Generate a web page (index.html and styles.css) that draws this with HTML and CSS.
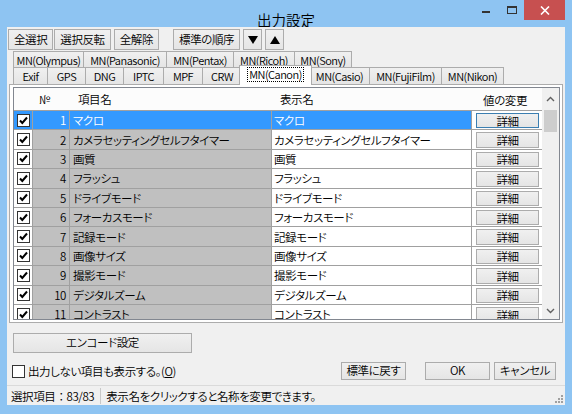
FILE: index.html
```html
<!DOCTYPE html>
<html lang="ja">
<head>
<meta charset="utf-8">
<title>出力設定</title>
<link rel="stylesheet" href="styles.css">
</head>
<body>
<div class="window">
  <div class="titlebar">
    <div></div>
    <div class="title">出力設定</div>
    <div class="caption">
      <div class="cap cap-min"><svg width="10" height="10" viewBox="0 0 10 10"><rect x="1" y="6" width="8" height="2" fill="#333"/></svg></div>
      <div class="cap cap-max"><svg width="12" height="10" viewBox="0 0 12 10"><rect x="1.5" y="1.5" width="9" height="7" fill="none" stroke="#333" stroke-width="1"/><rect x="1" y="1" width="10" height="2" fill="#333"/></svg></div>
      <div class="cap cap-close"><svg width="10" height="9" viewBox="0 0 10 9"><path d="M1 0.5 L9 8.5 M9 0.5 L1 8.5" stroke="#fff" stroke-width="1.6"/></svg></div>
    </div>
  </div>
  <div class="client">
    <div class="toolbar">
      <button class="btn">全選択</button>
      <button class="btn">選択反転</button>
      <button class="btn sp">全解除</button>
      <button class="btn sp-l">標準の順序</button>
      <button class="btn arrow sp"><svg width="10" height="8" viewBox="0 0 10 8"><polygon points="0,0 10,0 5,8" fill="#000"/></svg></button>
      <button class="btn arrow sp"><svg width="10" height="8" viewBox="0 0 10 8"><polygon points="0,8 10,8 5,0" fill="#000"/></svg></button>
    </div>
    <div class="tabs">
      <div class="tabrow r1">
        <div class="tab t-olympus">MN(Olympus)</div>
        <div class="tab t-panasonic">MN(Panasonic)</div>
        <div class="tab t-pentax">MN(Pentax)</div>
        <div class="tab t-ricoh">MN(Ricoh)</div>
        <div class="tab t-sony">MN(Sony)</div>
      </div>
      <div class="tabrow r2">
        <div class="tab t-exif">Exif</div>
        <div class="tab t-gps">GPS</div>
        <div class="tab t-dng">DNG</div>
        <div class="tab t-iptc">IPTC</div>
        <div class="tab t-mpf">MPF</div>
        <div class="tab t-crw">CRW</div>
        <div class="tab sel t-canon"><span class="focus">MN(Canon)</span></div>
        <div class="tab t-casio">MN(Casio)</div>
        <div class="tab t-fuji">MN(FujiFilm)</div>
        <div class="tab t-nikon">MN(Nikon)</div>
      </div>
    </div>
    <div class="panel">
      <div class="list">
        <div class="grid">
          <div class="row hdr">
            <div class="c"></div>
            <div class="c no">№</div>
            <div class="c name">項目名</div>
            <div class="c disp">表示名</div>
            <div class="c val">値の変更</div>
          </div>
          <div class="row selected">
            <div class="c chk"><svg class="cb" width="13" height="13" viewBox="0 0 13 13"><rect x="0.5" y="0.5" width="12" height="12" fill="#fff" stroke="#333"/><path d="M3 6.5 L5.3 9 L10 3.5" fill="none" stroke="#000" stroke-width="2"/></svg></div>
            <div class="c no">1</div><div class="c name">マクロ</div><div class="c disp">マクロ</div>
            <div class="c val"><span class="dbtn focused">詳細</span></div>
          </div>
          <div class="row">
            <div class="c chk"><svg class="cb" width="13" height="13" viewBox="0 0 13 13"><rect x="0.5" y="0.5" width="12" height="12" fill="#fff" stroke="#333"/><path d="M3 6.5 L5.3 9 L10 3.5" fill="none" stroke="#000" stroke-width="2"/></svg></div>
            <div class="c no">2</div><div class="c name">カメラセッティングセルフタイマー</div><div class="c disp">カメラセッティングセルフタイマー</div>
            <div class="c val"><span class="dbtn">詳細</span></div>
          </div>
          <div class="row">
            <div class="c chk"><svg class="cb" width="13" height="13" viewBox="0 0 13 13"><rect x="0.5" y="0.5" width="12" height="12" fill="#fff" stroke="#333"/><path d="M3 6.5 L5.3 9 L10 3.5" fill="none" stroke="#000" stroke-width="2"/></svg></div>
            <div class="c no">3</div><div class="c name">画質</div><div class="c disp">画質</div>
            <div class="c val"><span class="dbtn">詳細</span></div>
          </div>
          <div class="row">
            <div class="c chk"><svg class="cb" width="13" height="13" viewBox="0 0 13 13"><rect x="0.5" y="0.5" width="12" height="12" fill="#fff" stroke="#333"/><path d="M3 6.5 L5.3 9 L10 3.5" fill="none" stroke="#000" stroke-width="2"/></svg></div>
            <div class="c no">4</div><div class="c name">フラッシュ</div><div class="c disp">フラッシュ</div>
            <div class="c val"><span class="dbtn">詳細</span></div>
          </div>
          <div class="row">
            <div class="c chk"><svg class="cb" width="13" height="13" viewBox="0 0 13 13"><rect x="0.5" y="0.5" width="12" height="12" fill="#fff" stroke="#333"/><path d="M3 6.5 L5.3 9 L10 3.5" fill="none" stroke="#000" stroke-width="2"/></svg></div>
            <div class="c no">5</div><div class="c name">ドライブモード</div><div class="c disp">ドライブモード</div>
            <div class="c val"><span class="dbtn">詳細</span></div>
          </div>
          <div class="row">
            <div class="c chk"><svg class="cb" width="13" height="13" viewBox="0 0 13 13"><rect x="0.5" y="0.5" width="12" height="12" fill="#fff" stroke="#333"/><path d="M3 6.5 L5.3 9 L10 3.5" fill="none" stroke="#000" stroke-width="2"/></svg></div>
            <div class="c no">6</div><div class="c name">フォーカスモード</div><div class="c disp">フォーカスモード</div>
            <div class="c val"><span class="dbtn">詳細</span></div>
          </div>
          <div class="row">
            <div class="c chk"><svg class="cb" width="13" height="13" viewBox="0 0 13 13"><rect x="0.5" y="0.5" width="12" height="12" fill="#fff" stroke="#333"/><path d="M3 6.5 L5.3 9 L10 3.5" fill="none" stroke="#000" stroke-width="2"/></svg></div>
            <div class="c no">7</div><div class="c name">記録モード</div><div class="c disp">記録モード</div>
            <div class="c val"><span class="dbtn">詳細</span></div>
          </div>
          <div class="row">
            <div class="c chk"><svg class="cb" width="13" height="13" viewBox="0 0 13 13"><rect x="0.5" y="0.5" width="12" height="12" fill="#fff" stroke="#333"/><path d="M3 6.5 L5.3 9 L10 3.5" fill="none" stroke="#000" stroke-width="2"/></svg></div>
            <div class="c no">8</div><div class="c name">画像サイズ</div><div class="c disp">画像サイズ</div>
            <div class="c val"><span class="dbtn">詳細</span></div>
          </div>
          <div class="row">
            <div class="c chk"><svg class="cb" width="13" height="13" viewBox="0 0 13 13"><rect x="0.5" y="0.5" width="12" height="12" fill="#fff" stroke="#333"/><path d="M3 6.5 L5.3 9 L10 3.5" fill="none" stroke="#000" stroke-width="2"/></svg></div>
            <div class="c no">9</div><div class="c name">撮影モード</div><div class="c disp">撮影モード</div>
            <div class="c val"><span class="dbtn">詳細</span></div>
          </div>
          <div class="row">
            <div class="c chk"><svg class="cb" width="13" height="13" viewBox="0 0 13 13"><rect x="0.5" y="0.5" width="12" height="12" fill="#fff" stroke="#333"/><path d="M3 6.5 L5.3 9 L10 3.5" fill="none" stroke="#000" stroke-width="2"/></svg></div>
            <div class="c no">10</div><div class="c name">デジタルズーム</div><div class="c disp">デジタルズーム</div>
            <div class="c val"><span class="dbtn">詳細</span></div>
          </div>
          <div class="row">
            <div class="c chk"><svg class="cb" width="13" height="13" viewBox="0 0 13 13"><rect x="0.5" y="0.5" width="12" height="12" fill="#fff" stroke="#333"/><path d="M3 6.5 L5.3 9 L10 3.5" fill="none" stroke="#000" stroke-width="2"/></svg></div>
            <div class="c no">11</div><div class="c name">コントラスト</div><div class="c disp">コントラスト</div>
            <div class="c val"><span class="dbtn">詳細</span></div>
          </div>
        </div>
        <div class="vscroll">
          <div class="sb-up"><svg width="9" height="6" viewBox="0 0 9 6"><polyline points="1,5 4.5,1.5 8,5" fill="none" stroke="#606060" stroke-width="1.4"/></svg></div>
          <div class="sb-thumb"></div>
          <div class="sb-track"></div>
          <div class="sb-down"><svg width="9" height="6" viewBox="0 0 9 6"><polyline points="1,1 4.5,4.5 8,1" fill="none" stroke="#606060" stroke-width="1.4"/></svg></div>
        </div>
      </div>
    </div>
    <div class="encode-row">
      <button class="btn encode">エンコード設定</button>
    </div>
    <div class="opt-row">
      <label class="opt"><span class="box"></span><span>出力しない項目も表示する。(<u>O</u>)</span></label>
      <div class="dlg-btns">
        <button class="btn dlg">標準に戻す</button>
        <button class="btn dlg ok">OK</button>
        <button class="btn dlg cancel">キャンセル</button>
      </div>
    </div>
    <div class="status">
      <div class="st st1">選択項目：83/83</div>
      <div class="st st2">表示名をクリックすると名称を変更できます。</div>
      <div class="grip"><svg width="10" height="10" viewBox="0 0 10 10" fill="#a0a0a0"><rect x="7" y="1" width="2" height="2"/><rect x="4" y="4" width="2" height="2"/><rect x="7" y="4" width="2" height="2"/><rect x="1" y="7" width="2" height="2"/><rect x="4" y="7" width="2" height="2"/><rect x="7" y="7" width="2" height="2"/></svg></div>
    </div>
  </div>
</div>
</body>
</html>
```
FILE: styles.css
```css
* { box-sizing: border-box; }
html, body { margin: 0; padding: 0; }
body {
  width: 572px; height: 414px; overflow: hidden;
  font-family: "Noto Sans CJK JP", "Noto Sans", sans-serif;
  font-size: 11.5px;
  font-weight: 350;
  letter-spacing: -0.4px;
  font-feature-settings: "palt";
  color: #000;
}
.window {
  width: 572px; height: 414px;
  background: #8ec4f2;
  display: flex; flex-direction: column;
  padding: 0 7px 9px 7px;
}
.titlebar {
  height: 27px; flex: none;
  display: grid; grid-template-columns: 1fr auto 1fr;
}
.title {
  font-size: 14.5px; line-height: 20px; padding-top: 10px;
  letter-spacing: 0;
  color: #000;
}
.caption { justify-self: end; display: flex; align-items: flex-start; }
.cap { height: 20px; display: flex; align-items: center; justify-content: center; }
.cap-min { width: 26px; }
.cap-max { width: 25px; }
.cap-close { width: 41px; background: #c75050; }

.client {
  flex: 1; background: #f0f0f0;
  display: flex; flex-direction: column;
}
.btn {
  font: inherit; letter-spacing: inherit; font-feature-settings: "palt"; color: #000;
  margin: 0; padding: 0 5px;
  border: 1px solid #acacac;
  background: linear-gradient(#f0f0f0, #e5e5e5);
  display: flex; align-items: center; justify-content: center;
  line-height: 1; white-space: nowrap;
}
.toolbar {
  flex: none; height: 24px;
  display: flex; gap: 1px;
  padding: 2px 0 0 1px;
}
.toolbar .btn { height: 21px; }
.toolbar .sp { margin-left: 2px; }
.toolbar .sp-l { margin-left: 13px; }
.toolbar .arrow { width: 19px; padding: 0; }

.tabs { flex: none; padding-left: 6px; font-size: 11px; letter-spacing: -0.5px; }
.tabrow { display: flex; }
.tabrow.r1 { height: 16px; }
.tabrow.r2 { height: 17px; }
.tab {
  border: 1px solid #acacac; border-bottom: none;
  margin-left: -1px;
  padding: 0;
  background: linear-gradient(#f0f0f0, #e5e5e5);
  display: flex; align-items: center; justify-content: center;
  white-space: nowrap;
}
.tabrow .tab:first-child { margin-left: 0; }
.t-olympus { width: 71px; }
.t-panasonic { width: 84px; }
.t-pentax { width: 68px; }
.t-ricoh { width: 62px; }
.t-sony { width: 58px; }
.t-exif { width: 35px; }
.t-gps { width: 39px; }
.t-dng { width: 39px; }
.t-iptc { width: 41px; }
.t-mpf { width: 40px; }
.t-crw { width: 40px; }
.t-canon { width: 73px; }
.t-casio { width: 61px; }
.t-fuji { width: 73px; }
.t-nikon { width: 63px; }
.tab.sel {
  position: relative; z-index: 2;
  background: #fff;
  height: 20px; margin: -2px -2px -1px -3px;
  padding-bottom: 2px;
}
.focus { border: 1px dotted #000; padding: 0 1px; line-height: 13px; }

.panel {
  flex: none; height: 239px;
  margin: 0 2px;
  border: 1px solid #acacac;
  background: #fff;
  padding: 2px 2px 2px 3px;
}
.list {
  height: 100%;
  border: 1px solid #828790;
  display: flex;
  overflow: hidden;
}
.grid { flex: 1; overflow: hidden; background: #fff; }
.row {
  display: grid;
  grid-template-columns: 19px 37px 202px 200px 70px;
  height: 19.4px;
}
.row .c {
  border-right: 1px solid #a0a0a0;
  border-bottom: 1px solid #a0a0a0;
  display: flex; align-items: center;
  white-space: nowrap; overflow: hidden;
}
.row .no { justify-content: flex-end; padding-right: 3px; background: #c0c0c0; }
.row .name { padding-left: 3px; background: #c0c0c0; }
.row .disp { padding-left: 2px; background: #fff; }
.row .chk { justify-content: center; background: #fff; }
.row .val { background: #fff; padding: 2px 3px 1px 4px; border-right: none; }
.row.hdr { height: 23px; }
.row.hdr .c { background: #fcfcfc; border-right: none; border-bottom: 1px solid #a0a0a0; justify-content: flex-start; }
.row.hdr .no { padding-left: 6px; padding-right: 0; }
.row.hdr .name { padding-left: 8px; }
.row.hdr .disp { padding-left: 8px; }
.row.hdr .val { padding-left: 11px; }
.row.selected .chk, .row.selected .no, .row.selected .name, .row.selected .disp {
  background: #3399ff; color: #fff;
}
.dbtn {
  flex: 1; height: 100%;
  border: 1px solid #acacac;
  background: linear-gradient(#f0f0f0, #e5e5e5);
  display: flex; align-items: center; justify-content: center;
}
.dbtn.focused { border-color: #3c7fb1; }

.vscroll {
  width: 17px; flex: none; background: #f0f0f0;
  display: flex; flex-direction: column;
}
.sb-up { height: 22px; display: flex; align-items: center; justify-content: center; }
.sb-thumb { height: 22px; margin: 0 2px 0 2px; background: #cdcdcd; }
.sb-track { flex: 1; }
.sb-down { height: 17px; display: flex; align-items: center; justify-content: center; }

.encode-row { flex: none; padding: 10px 0 0 6px; }
.btn.encode { width: 179px; height: 20px; }

.opt-row {
  flex: none; height: 18px; margin-top: 9px;
  display: flex; align-items: center; justify-content: space-between;
  padding: 0 9px 0 5px;
}
.opt { display: flex; align-items: center; gap: 3px; }
.box { width: 13px; height: 13px; border: 1px solid #333; background: #fff; }
.dlg-btns { display: flex; height: 18px; }
.btn.dlg { width: 65px; height: 18px; padding: 0; }
.btn.ok { margin-left: 19px; }
.btn.cancel { margin-left: 4px; width: 62px; }

.status {
  flex: 1; margin-top: 5px;
  border-top: 1px solid #dadada;
  display: flex; align-items: center;
}
.st { height: 16px; display: flex; align-items: center; }
.st1 { padding: 0 6px 0 4px; border-right: 1px solid #c8c8c8; font-feature-settings: normal; }
.st2 { padding-left: 5px; flex: 1; }
.grip { align-self: flex-end; padding: 0 1px 1px 0; display: flex; }
```
